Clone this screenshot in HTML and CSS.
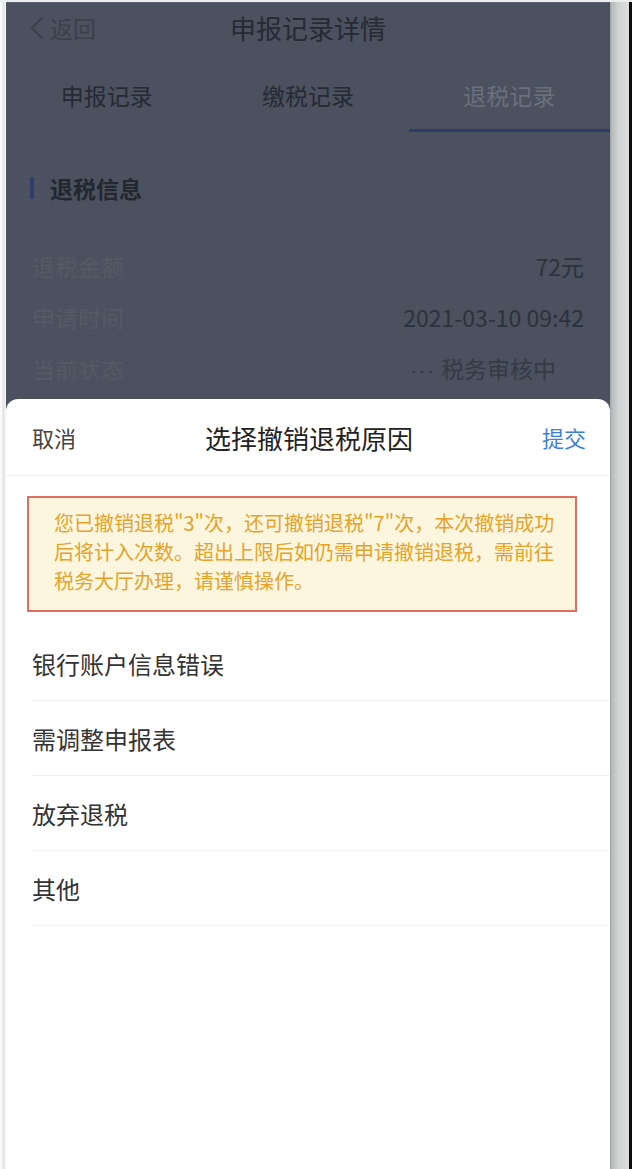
FILE: index.html
```html
<!DOCTYPE html>
<html lang="zh-CN">
<head>
<meta charset="utf-8">
<title>选择撤销退税原因</title>
<link rel="stylesheet" href="styles.css">
</head>
<body>
<div class="device">
  <div class="edge-left"></div>
  <div class="screen">
    <div class="page">
      <div class="navbar">
        <div class="back">
          <svg class="chev" width="14" height="22" viewBox="0 0 14 22"><polyline points="12,1 2,11 12,21" fill="none" stroke="#3a404c" stroke-width="2"/></svg>
          <span>返回</span>
        </div>
        <div class="nav-title">申报记录详情</div>
        <div class="nav-spacer"></div>
      </div>
      <div class="tabs">
        <div class="tab">申报记录</div>
        <div class="tab">缴税记录</div>
        <div class="tab active">退税记录</div>
      </div>
      <div class="section">
        <div class="section-title"><span class="bar"></span>退税信息</div>
        <div class="info-row"><span class="label">退税金额</span><span class="value">72元</span></div>
        <div class="info-row"><span class="label">申请时间</span><span class="value">2021-03-10 09:42</span></div>
        <div class="info-row"><span class="label">当前状态</span><span class="value status"><span class="dots">···</span>税务审核中</span></div>
      </div>
    </div>
    <div class="sheet">
      <div class="sheet-header">
        <span class="cancel">取消</span>
        <span class="sheet-title">选择撤销退税原因</span>
        <span class="submit">提交</span>
      </div>
      <div class="notice">您已撤销退税"3"次，还可撤销退税"7"次，本次撤销成功<br>后将计入次数。超出上限后如仍需申请撤销退税，需前往<br>税务大厅办理，请谨慎操作。</div>
      <ul class="reasons">
        <li class="reason">银行账户信息错误</li>
        <li class="reason">需调整申报表</li>
        <li class="reason">放弃退税</li>
        <li class="reason">其他</li>
      </ul>
    </div>
  </div>
  <div class="edge-right"><div class="edge-black"></div></div>
</div>
</body>
</html>
```
FILE: styles.css
```css
* { box-sizing: border-box; }
html, body { margin: 0; padding: 0; }
body {
  width: 632px;
  height: 1169px;
  overflow: hidden;
  background: #f3f3f4;
  font-family: "Noto Sans CJK SC", "Noto Sans", sans-serif;
}
.device {
  display: flex;
  height: 1169px;
  padding-top: 2px;
  background: #eceef0;
}
.edge-left {
  width: 6px;
  background: linear-gradient(to right, #fafafa 0, #fafafa 2px, #dedede 3px, #e9e9e9 4px, #f6f6f6 6px);
}
.screen {
  width: 604px;
  display: flex;
  flex-direction: column;
  background: #4b515e;
}
.edge-right {
  width: 22px;
  display: flex;
  justify-content: flex-end;
  background: linear-gradient(to right, #9fa2a2 0, #b9bcbc 2px, #cfd2d2 8px, #dadddc 18px);
}
.edge-black { width: 3px; background: #0c0c0c; }

/* dimmed page */
.page {
  height: 395px;
  background: #4b515e;
  border-top: 1px solid #5a606c;
}
.navbar {
  height: 49px;
  display: flex;
  align-items: center;
  padding: 0 24px;
}
.back {
  width: 100px;
  display: flex;
  align-items: center;
  gap: 6px;
  color: #3a404c;
  font-size: 23px;
}
.chev { display: block; }
.nav-title {
  flex: 1;
  text-align: center;
  color: #252a34;
  font-size: 26px;
}
.nav-spacer { width: 100px; }
.tabs {
  height: 80px;
  display: grid;
  grid-template-columns: 1fr 1fr 1fr;
}
.tab {
  padding-top: 28px;
  line-height: 30px;
  text-align: center;
  font-size: 23px;
  color: #252a34;
}
.tab.active {
  color: #6a707c;
  border-bottom: 3px solid #2c3a66;
}
.section { padding: 44px 26px 0 24px; }
.section-title {
  display: flex;
  align-items: center;
  gap: 16px;
  height: 24px;
  font-size: 23px;
  font-weight: bold;
  color: #23272f;
}
.bar {
  width: 4px;
  height: 22px;
  background: #2f3d6a;
}
.info-row {
  height: 51px;
  display: flex;
  align-items: center;
  justify-content: space-between;
  font-size: 23px;
  padding-left: 2px;
}
.section-title + .info-row { margin-top: 40px; }
.label { color: #545a66; }
.value { color: #2d323c; }
.status { padding-right: 28px; color: #343a46; }
.dots {
  font-family: "Liberation Sans", sans-serif;
  font-size: 22px;
  letter-spacing: 1px;
  margin-right: 6px;
}

/* bottom sheet */
.sheet {
  flex: 1;
  margin-top: 2px;
  background: #ffffff;
  border-radius: 12px 12px 0 0;
}
.sheet-header {
  height: 77px;
  display: flex;
  align-items: center;
  justify-content: space-between;
  padding: 0 24px 0 26px;
  border-bottom: 1px solid #f0f0f0;
}
.cancel { font-size: 22px; color: #444; width: 60px; }
.sheet-title { font-size: 26px; color: #222; }
.submit { font-size: 22px; color: #3d7fd6; width: 60px; text-align: right; }
.notice {
  margin: 20px 33px 0 21px;
  height: 116px;
  padding: 10px 10px 0 25px;
  border: 2px solid #df6f63;
  background: #fdf6df;
  color: #e5a329;
  font-size: 20px;
  line-height: 29px;
  white-space: nowrap;
}
.reasons {
  list-style: none;
  margin: 14px 0 0 0;
  padding: 0;
}
.reason {
  height: 75px;
  margin-left: 26px;
  display: flex;
  align-items: center;
  border-bottom: 1px solid #f1f1f1;
  font-size: 24px;
  color: #333;
}
```
